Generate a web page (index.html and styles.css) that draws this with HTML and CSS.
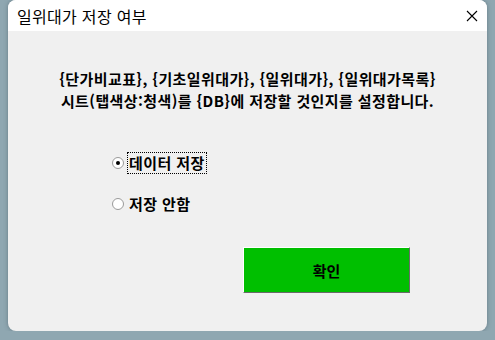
FILE: index.html
```html
<!DOCTYPE html>
<html lang="ko">
<head>
    <meta charset="UTF-8">
    <title>일위대가 저장 여부</title>
    <link rel="stylesheet" href="styles.css">
</head>
<body>
    <div class="window">
        <div class="titlebar">
            <span class="title">일위대가 저장 여부</span>
            <span class="close">
                <svg width="12" height="12" viewBox="0 0 12 12"><path d="M1 1 L11 11 M11 1 L1 11" stroke="#000" stroke-width="1.1" fill="none"/></svg>
            </span>
        </div>
        <div class="content">
            <p class="desc">{단가비교표}, {기초일위대가}, {일위대가}, {일위대가목록}<br>시트(탭색상:청색)를 {DB}에 저장할 것인지를 설정합니다.</p>
            <div class="options">
                <label class="option">
                    <input type="radio" name="save" checked>
                    <span class="focus">데이터 저장</span>
                </label>
                <label class="option">
                    <input type="radio" name="save">
                    <span>저장 안함</span>
                </label>
            </div>
            <div class="actions">
                <button type="button">확인</button>
            </div>
        </div>
    </div>
</body>
</html>
```

FILE: styles.css
```css
body {
    margin: 0;
    background: #8fa7b1;
    font-family: "Noto Sans CJK KR", "Noto Sans", sans-serif;
    color: #000;
}
.window {
    width: 479px;
    height: 331px;
    margin-left: 8px;
    background: #f0f0f0;
    border-radius: 8px;
    overflow: hidden;
    box-shadow: 0 0 4px rgba(60, 80, 90, 0.5);
}
.titlebar {
    height: 31px;
    background: #fff;
    display: flex;
    align-items: center;
    justify-content: space-between;
    padding: 0 9px 0 9px;
}
.title {
    font-size: 16px;
    letter-spacing: 0.3px;
}
.close {
    display: flex;
    width: 12px;
    height: 12px;
}
.content {
    padding-top: 37px;
}
.desc {
    margin: 0;
    text-align: center;
    font-weight: bold;
    font-size: 15px;
    line-height: 22px;
    letter-spacing: 0.4px;
}
.options {
    margin-top: 40px;
    padding-left: 104px;
    display: flex;
    flex-direction: column;
    gap: 19px;
}
.option {
    display: flex;
    align-items: center;
    font-size: 15px;
    font-weight: bold;
    letter-spacing: 0.4px;
    height: 22px;
}
.option input {
    appearance: none;
    width: 12px;
    height: 12px;
    margin: 0 3px 0 0;
    border: 1px solid #9a9a9a;
    border-radius: 50%;
    background: #fff;
    box-sizing: border-box;
    display: grid;
    place-content: center;
}
.option input:checked::before {
    content: "";
    width: 4px;
    height: 4px;
    border-radius: 50%;
    background: #000;
}
.option span {
    padding: 0 1px;
    line-height: 20px;
    border: 1px dotted transparent;
}
.option .focus {
    border-color: #000;
}
.actions {
    display: flex;
    justify-content: flex-end;
    padding-right: 77px;
    margin-top: 32px;
}
button {
    width: 167px;
    height: 46px;
    background: #00bf00;
    border: 1px solid;
    border-color: #fff #6a6a6a #6a6a6a #fff;
    font-family: "Noto Sans CJK KR", sans-serif;
    font-size: 15px;
    font-weight: bold;
    color: #000;
}
```
